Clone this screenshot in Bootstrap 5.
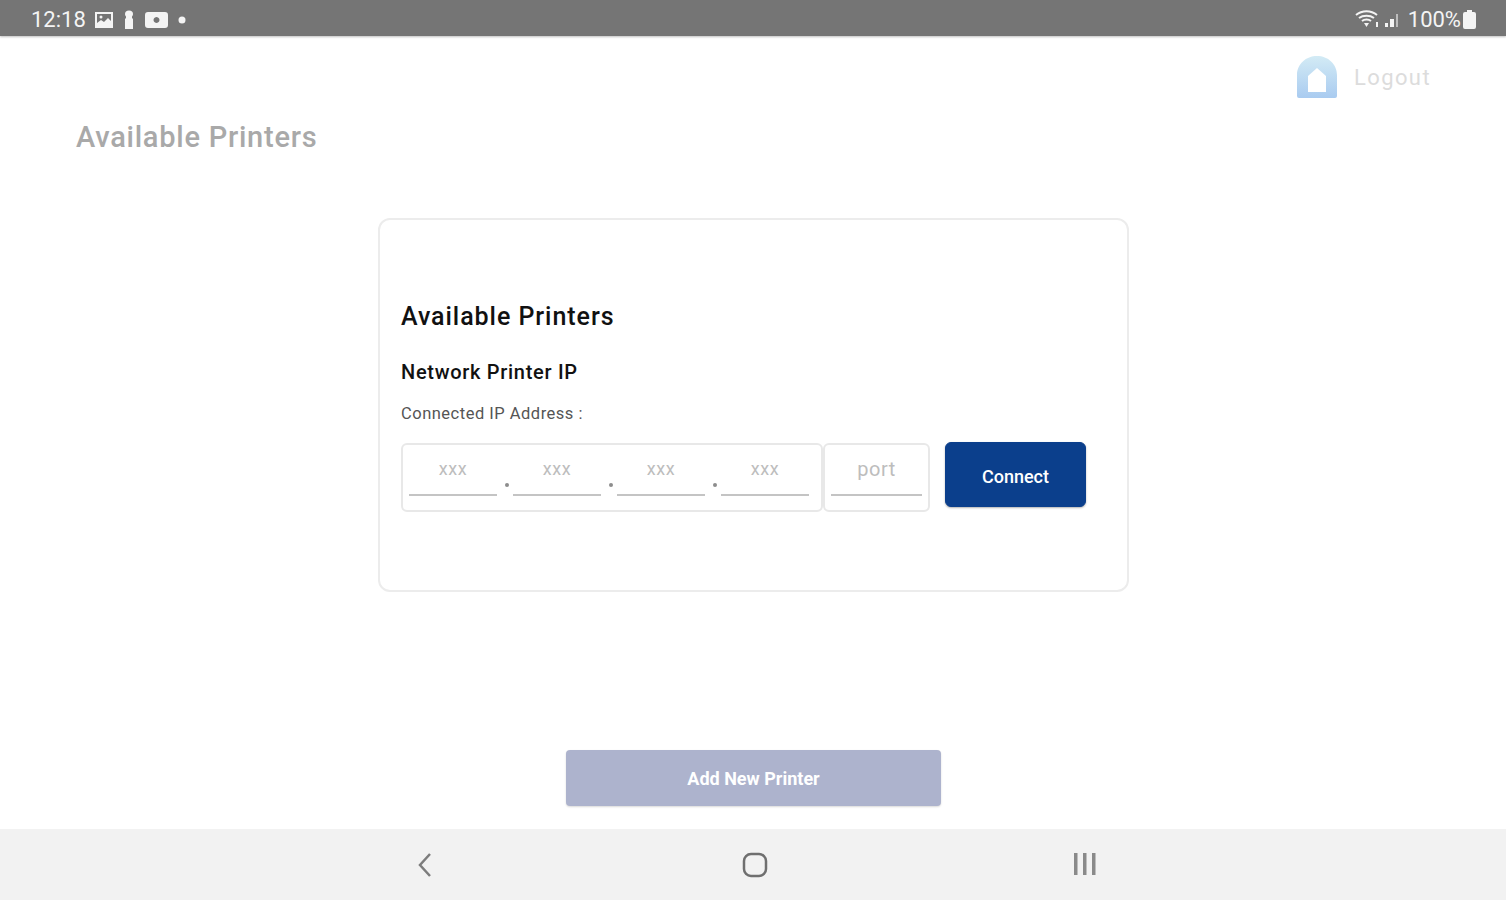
<!DOCTYPE html>
<html lang="en">
<head>
  <meta charset="UTF-8" />
  <meta name="viewport" content="width=device-width, initial-scale=1.0"/>
  <title>Available Printers</title>
  <link href="https://cdn.jsdelivr.net/npm/bootstrap@5.3.0/dist/css/bootstrap.min.css" rel="stylesheet" />
  <style>
    html, body { height: 900px; overflow: hidden; }
    body { font-family: Roboto, "Liberation Sans", sans-serif; background: #fff; color: #111; }
    .status-bar { height: 36px; background: #757575; color: #f4f4f4; font-size: 22px; padding: 3px 28px 0 31px; box-shadow: 0 1px 2px rgba(0,0,0,.25); }
    .status-icon { margin-left: 8px; }
    .status-battery { margin-left: 8px; }
    .page-main { height: 793px; }
    .logout-row { height: 82px; padding: 18px 75px 0 0; }
    .logout-text { color: #dcdcdc; font-size: 22px; letter-spacing: 1.4px; line-height: 48px; margin-left: 15px; }
    .page-title { color: #a9a9a9; font-size: 29px; font-weight: 500; letter-spacing: .75px; line-height: 38px; margin: 0 0 0 76px; }
    .printer-box { width: 751px; height: 374px; margin: 62px 0 0 378px; border: 2px solid #ececec; border-radius: 12px; padding: 79px 0 0 21px; }
    .box-title { font-size: 25px; font-weight: 500; letter-spacing: .95px; line-height: 36px; margin: 0 0 25px; color: #111; }
    .box-label { font-size: 20px; font-weight: 500; letter-spacing: .7px; line-height: 24px; margin: 0 0 18px; color: #111; }
    .box-sub { font-size: 16.5px; letter-spacing: .5px; line-height: 24px; margin: 0 0 17px; color: #555; }
    .ip-group { width: 422px; height: 69px; border: 2px solid #e8e8e8; border-radius: 6px; padding: 0 6px; }
    .port-group { width: 107px; height: 69px; border: 2px solid #e8e8e8; border-radius: 6px; padding: 0 6px; }
    .octet { width: 88px; height: 51px; border-bottom: 2px solid #c4c4c4; color: #bdbdbd; font-size: 18px; letter-spacing: .5px; line-height: 48px; text-align: center; }
    .port-field { width: 91px; font-size: 20px; }
    .dot-sep { width: 16px; height: 51px; position: relative; }
    .dot-sep::after { content: ""; position: absolute; left: 8px; bottom: 9px; width: 4px; height: 4px; border-radius: 50%; background: #8d8d8d; }
    .btn-connect { width: 141px; height: 65px; margin: -1px 0 0 15px; background: #0b3f8c; border: 1px solid #0b3f8c; border-radius: 6px; color: #fff; font-size: 18px; font-weight: 500; padding-top: 10px; box-shadow: 0 1px 2px rgba(0,0,0,.3); }
    .btn-connect:hover { background: #0b3f8c; color: #fff; }
    .btn-add { width: 375px; height: 56px; margin: 158px 0 0 566px; background: #adb3cd; border: 0; border-radius: 4px; color: #fff; font-size: 18px; font-weight: 700; box-shadow: 0 1px 2px rgba(0,0,0,.15); display: block; padding: 0; }
    .btn-add:hover { background: #adb3cd; color: #fff; }
    .nav-bar { height: 71px; background: #f2f2f2; position: relative; }
    .nav-slot { position: absolute; top: 23px; }
    .nav-back { left: 416px; }
    .nav-home { left: 742px; }
    .nav-recent { left: 1072px; }
  </style>
</head>
<body>
  <div class="status-bar d-flex align-items-center justify-content-between">
    <div class="d-flex align-items-center">
      <span>12:18</span>
      <svg class="status-icon" width="20" height="18" viewBox="0 0 20 18"><path fill="#f4f4f4" fill-rule="evenodd" d="M1 1h18v16H1zM3 3v9l4-3 3 2 4-4 3 3V3z"/><circle cx="7" cy="6" r="1.5" fill="#f4f4f4"/></svg>
      <svg class="status-icon" width="14" height="20" viewBox="0 0 14 20"><path fill="#f4f4f4" d="M3 4a4 3.500 0 0 1 8 0c0 1-.5 2-1 2.500V8l1 1v10H3V9l1-1V6.500C3.500 6 3 5 3 4z"/></svg>
      <svg class="status-icon" width="25" height="18" viewBox="0 0 25 18"><path fill="#f4f4f4" fill-rule="evenodd" d="M4 1h17a3 3 0 0 1 3 3v10a3 3 0 0 1-3 3H4a3 3 0 0 1-3-3V4a3 3 0 0 1 3-3zM12.500 6a3 3 0 1 0 .01 0z"/></svg>
      <svg class="status-icon" width="10" height="10" viewBox="0 0 10 10"><circle cx="5" cy="5" r="3.500" fill="#f4f4f4"/></svg>
    </div>
    <div class="d-flex align-items-center">
      <svg width="25" height="20" viewBox="0 0 25 20"><path fill="none" stroke="#f4f4f4" stroke-width="2" d="M1 5c6-5 15-5 21 0M4 8c4-3 11-3 15 0M7 11c2.500-2 6.500-2 9 0"/><path fill="#f4f4f4" d="M9 13h5l-2.500 4zM21 12h2v5h-2z"/></svg>
      <svg class="ms-1" width="16" height="16" viewBox="0 0 16 16"><path fill="#f4f4f4" d="M1 11h3v4H1zM6 7h4v8H6z"/><path fill="#bdbdbd" d="M12 2h2v13h-2z"/></svg>
      <span class="status-battery">100%</span>
      <svg width="17" height="21" viewBox="0 0 17 21"><path fill="#f4f4f4" d="M6 1h5v2h2a2 2 0 0 1 2 2v13a2 2 0 0 1-2 2H4a2 2 0 0 1-2-2V5a2 2 0 0 1 2-2h2z"/></svg>
    </div>
  </div>

  <div class="page-main">
    <div class="logout-row d-flex justify-content-end align-items-start">
      <svg width="44" height="46" viewBox="0 0 44 46">
        <defs><linearGradient id="lg" x1="0" y1="0" x2="0" y2="1"><stop offset="0" stop-color="#d3ebf5"/><stop offset="1" stop-color="#a9cbf0"/></linearGradient></defs>
        <path fill="url(#lg)" fill-rule="evenodd" d="M2 21C2 10 11 2 22 2s20 8 20 19v21a2 2 0 0 1-2 2H4a2 2 0 0 1-2-2zM13 38h18V22l-9-8-9 8z"/>
      </svg>
      <span class="logout-text">Logout</span>
    </div>
    <h1 class="page-title">Available Printers</h1>

    <div class="printer-box">
      <h2 class="box-title">Available Printers</h2>
      <div class="box-label">Network Printer IP</div>
      <div class="box-sub">Connected IP Address :</div>
      <div class="d-flex align-items-start">
        <div class="ip-group d-flex align-items-start">
          <div class="octet">xxx</div><div class="dot-sep"></div>
          <div class="octet">xxx</div><div class="dot-sep"></div>
          <div class="octet">xxx</div><div class="dot-sep"></div>
          <div class="octet">xxx</div>
        </div>
        <div class="port-group">
          <div class="octet port-field">port</div>
        </div>
        <button type="button" class="btn btn-connect">Connect</button>
      </div>
    </div>

    <button type="button" class="btn btn-add">Add New Printer</button>
  </div>

  <div class="nav-bar">
    <svg class="nav-slot nav-back" width="18" height="26" viewBox="0 0 18 26"><path fill="none" stroke="#7d7d7d" stroke-width="2.500" d="M14 2L4 13l10 11"/></svg>
    <svg class="nav-slot nav-home" width="26" height="26" viewBox="0 0 26 26"><rect x="2" y="2" width="22" height="22" rx="7" fill="none" stroke="#6f6f6f" stroke-width="2.500"/></svg>
    <svg class="nav-slot nav-recent" width="26" height="24" viewBox="0 0 26 24"><path fill="#8a8a8a" d="M2 1h3.500v22H2zM11 1h3.500v22H11zM20 1h3.500v22H20z"/></svg>
  </div>
</body>
</html>
